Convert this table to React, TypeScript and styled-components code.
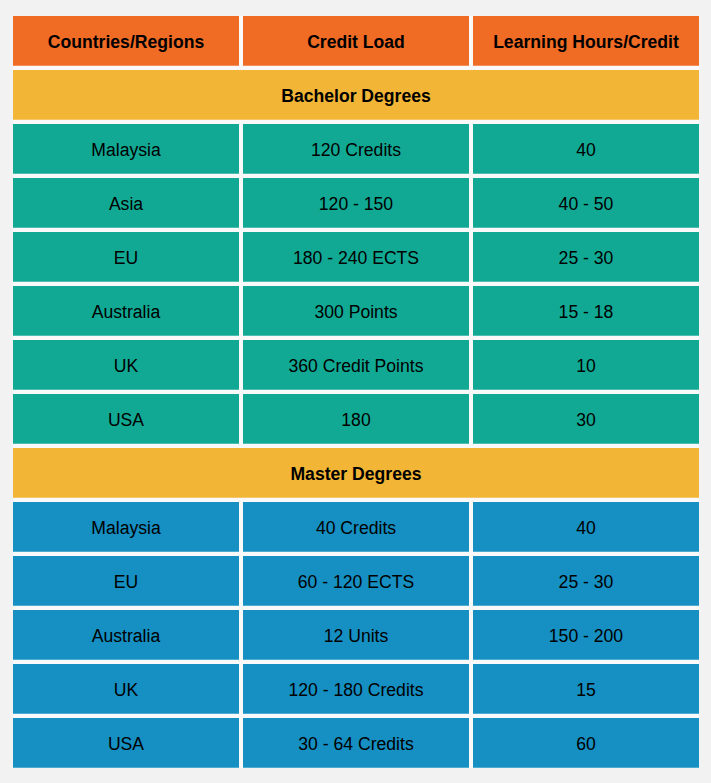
import React from "react";
import styled, { createGlobalStyle } from "styled-components";

const Global = createGlobalStyle`
  html, body { margin: 0; padding: 0; background: #f2f2f2; }
  body { font-family: "Liberation Sans", Arial, sans-serif; }
`;

const Page = styled.div`
  padding: 16px 12px 15px 13px;
  width: 711px;
  box-sizing: border-box;
`;

const Table = styled.div`
  display: grid;
  grid-template-columns: repeat(3, 226px);
  grid-auto-rows: 50px;
  gap: 4px;
  background: #f9f9f9;
`;

type Tone = "head" | "section" | "teal" | "blue";

const colors: Record<Tone, string> = {
  head: "#f06b24",
  section: "#f2b535",
  teal: "#12a994",
  blue: "#168fc2",
};

const Cell = styled.div<{ $tone: Tone; $span?: boolean }>`
  display: flex;
  align-items: center;
  justify-content: center;
  padding-top: 2px;
  box-sizing: border-box;
  background: ${(p) => colors[p.$tone]};
  color: #000;
  font-size: 17.6px;
  font-weight: ${(p) => (p.$tone === "head" || p.$tone === "section" ? 700 : 400)};
  grid-column: ${(p) => (p.$span ? "1 / -1" : "auto")};
  box-shadow: inset 0 -1px 0 rgba(255, 255, 255, 0.25);
`;

const bachelor = [
  ["Malaysia", "120 Credits", "40"],
  ["Asia", "120 - 150", "40 - 50"],
  ["EU", "180 - 240 ECTS", "25 - 30"],
  ["Australia", "300 Points", "15 - 18"],
  ["UK", "360 Credit Points", "10"],
  ["USA", "180", "30"],
];

const master = [
  ["Malaysia", "40 Credits", "40"],
  ["EU", "60 - 120 ECTS", "25 - 30"],
  ["Australia", "12 Units", "150 - 200"],
  ["UK", "120 - 180 Credits", "15"],
  ["USA", "30 - 64 Credits", "60"],
];

export default function App() {
  return (
    <>
      <Global />
      <Page>
        <Table>
          {["Countries/Regions", "Credit Load", "Learning Hours/Credit"].map((h) => (
            <Cell key={h} $tone="head">{h}</Cell>
          ))}
          <Cell $tone="section" $span>Bachelor Degrees</Cell>
          {bachelor.flatMap((r, i) =>
            r.map((c, j) => (
              <Cell key={`b${i}-${j}`} $tone="teal">{c}</Cell>
            ))
          )}
          <Cell $tone="section" $span>Master Degrees</Cell>
          {master.flatMap((r, i) =>
            r.map((c, j) => (
              <Cell key={`m${i}-${j}`} $tone="blue">{c}</Cell>
            ))
          )}
        </Table>
      </Page>
    </>
  );
}
